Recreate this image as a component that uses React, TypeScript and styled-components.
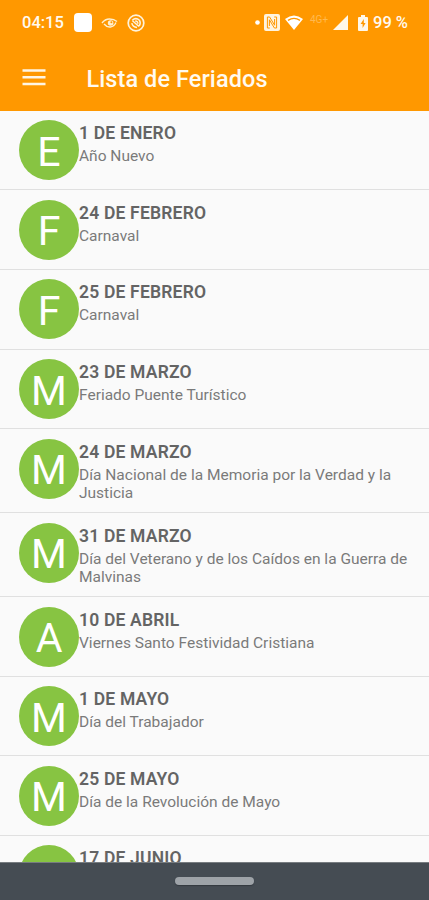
import React from 'react';
import styled, { createGlobalStyle } from 'styled-components';

const GlobalStyle = createGlobalStyle`
  * { box-sizing: border-box; }
  body { margin: 0; background: #fafafa; font-family: Roboto, sans-serif; }
`;

const Screen = styled.div`
  width: 429px;
  height: 900px;
  display: flex;
  flex-direction: column;
  overflow: hidden;
  background: #fafafa;
`;

const Header = styled.header`
  height: 110.8px;
  flex: none;
  background: #ff9800;
  color: #fffaf0;
`;

const StatusBar = styled.div`
  height: 45px;
  padding: 0 21px 0 22px;
  display: flex;
  align-items: center;
  justify-content: space-between;
`;

const StatusGroup = styled.div`
  display: flex;
  align-items: center;
`;

const StatusText = styled.span<{ $width: number }>`
  width: ${(p) => p.$width}px;
  font-size: 16.5px;
  font-weight: 500;
  line-height: 20px;
  white-space: nowrap;
`;

const NetworkLabel = styled.span`
  width: 20px;
  margin: 0 3px 6px 7px;
  font-size: 10px;
  line-height: 10px;
  color: #ffb850;
`;

const Glyph = styled.svg<{ $left?: number }>`
  display: block;
  flex: none;
  margin-left: ${(p) => p.$left ?? 0}px;
`;

const Toolbar = styled.div`
  height: 65px;
  padding: 0 23px 0 22px;
  display: flex;
  align-items: center;
`;

const MenuButton = styled.button`
  width: 24px;
  height: 24px;
  padding: 0;
  border: 0;
  background: none;
  color: inherit;
`;

const PageTitle = styled.h1`
  margin: 2px 0 0 40.5px;
  font-size: 23.5px;
  font-weight: 500;
  line-height: 28px;
  letter-spacing: 0.08px;
  white-space: nowrap;
`;

const HolidayList = styled.ul`
  flex: 1;
  min-height: 0;
  margin: 0;
  padding: 0;
  overflow: hidden;
  list-style: none;
`;

const HolidayRow = styled.li<{ $tall: boolean }>`
  height: ${(p) => (p.$tall ? 84 : 79.6)}px;
  padding: 9.4px 10px 0 19px;
  display: flex;
  align-items: flex-start;
  border-bottom: 1.5px solid #e0e0e0;
`;

const Avatar = styled.div`
  width: 60px;
  height: 60px;
  flex: none;
  display: flex;
  align-items: center;
  justify-content: center;
  padding-top: 3.4px;
  border-radius: 50%;
  background: #87c442;
  color: #fff;
  font-size: 41px;
  line-height: 48px;
`;

const Details = styled.div`
  flex: 1;
  min-width: 0;
  padding-top: 3px;
`;

const DateLabel = styled.div`
  font-size: 17.5px;
  font-weight: 600;
  line-height: 20px;
  letter-spacing: 0.19px;
  color: #646464;
  white-space: nowrap;
`;

const Description = styled.div`
  margin-top: 4px;
  font-size: 15.5px;
  line-height: 18px;
  color: #7a7a7a;
  white-space: pre-line;
`;

const NavigationBar = styled.footer`
  height: 38px;
  flex: none;
  display: flex;
  align-items: center;
  justify-content: center;
  border-top: 1px solid #777c80;
  background: #454c53;
`;

const HomeHandle = styled.div`
  width: 79px;
  height: 8px;
  margin-bottom: 1px;
  border-radius: 4px;
  background: #9ea3a8;
  box-shadow: 0 1px 1px #343a40;
`;

const holidays = [
  { date: '1 DE ENERO', letter: 'E', name: 'Año Nuevo' },
  { date: '24 DE FEBRERO', letter: 'F', name: 'Carnaval' },
  { date: '25 DE FEBRERO', letter: 'F', name: 'Carnaval' },
  { date: '23 DE MARZO', letter: 'M', name: 'Feriado Puente Turístico' },
  { date: '24 DE MARZO', letter: 'M', name: 'Día Nacional de la Memoria por la Verdad y la\nJusticia' },
  { date: '31 DE MARZO', letter: 'M', name: 'Día del Veterano y de los Caídos en la Guerra de\nMalvinas' },
  { date: '10 DE ABRIL', letter: 'A', name: 'Viernes Santo Festividad Cristiana' },
  { date: '1 DE MAYO', letter: 'M', name: 'Día del Trabajador' },
  { date: '25 DE MAYO', letter: 'M', name: 'Día de la Revolución de Mayo' },
  { date: '17 DE JUNIO', letter: 'J', name: '' },
];

export default function App() {
  return (
    <>
      <GlobalStyle />
      <Screen>
        <Header>
          <StatusBar>
            <StatusGroup>
              <StatusText $width={52}>04:15</StatusText>
              <Glyph width="18" height="19" viewBox="0 0 18 19">
                <rect width="18" height="19" rx="4" fill="#fff" />
              </Glyph>
              <Glyph $left={9} width="17" height="12" viewBox="0 0 17 12" fill="none" stroke="#fff0d0" strokeWidth="1.4">
                <path d="M1 6Q4 2 8.5 2T16 4.5M3 7Q6 10.5 9.5 10T15 5.5" />
                <circle cx="9.6" cy="6" r="2.8" fill="#fff0d0" stroke="none" />
                <circle cx="10.4" cy="5.2" r="1" fill="#ff9800" stroke="none" />
              </Glyph>
              <Glyph $left={9} width="18" height="18" viewBox="0 0 18 18" fill="none" stroke="#fff3dc" strokeWidth="1.7">
                <circle cx="9" cy="9" r="7.8" />
                <path d="M5.2 6.2Q9 3 12.4 6.2Q14.2 9.2 12.2 12M4.8 9.2Q5.6 13.2 10 13.4M5.5 6.8L12 12.5M8.2 7Q11 7 10.8 9.8" strokeWidth="1.5" />
              </Glyph>
            </StatusGroup>
            <StatusGroup>
              <Glyph width="5" height="5" viewBox="0 0 5 5">
                <circle cx="2.5" cy="2.5" r="2.3" fill="#fff" />
              </Glyph>
              <Glyph $left={4} width="16" height="17" viewBox="0 0 16 17">
                <rect width="16" height="17" rx="2" fill="#fff4df" />
                <path d="M5.8 14H3.4V3h2.2l5 8.2V5M10.2 3h2.4v11h-2.2l-5-8.2V12" fill="none" stroke="#ff9800" strokeWidth="1" />
              </Glyph>
              <Glyph $left={5} width="18" height="15" viewBox="0 0 18 15">
                <path d="M0 4Q9-3 18 4L9 15Z" fill="#fff" />
                <path d="M3 5.4Q9 1.4 15 5.4" fill="none" stroke="#ff9800" strokeWidth="1.3" />
              </Glyph>
              <NetworkLabel>4G+</NetworkLabel>
              <Glyph width="15" height="15" viewBox="0 0 15 15">
                <path d="M15 0V15H0Z" fill="#fff8ea" />
              </Glyph>
              <Glyph $left={10} width="10" height="16" viewBox="0 0 10 16">
                <path d="M3 0h4v2h2q1 0 1 1v12q0 1-1 1H1q-1 0-1-1V3q0-1 1-1h2Z" fill="#fff8ea" />
                <path d="M5.8 4L2.6 9h2v4l3-5H5.8Z" fill="#ff9800" />
              </Glyph>
              <Glyph width="5" height="1" />
              <StatusText $width={35}>99 %</StatusText>
            </StatusGroup>
          </StatusBar>
          <Toolbar>
            <MenuButton aria-label="Menú">
              <Glyph width="24" height="24" viewBox="0 0 24 24" stroke="#fff5e3" strokeWidth="2.5">
                <path d="M.5 4.5h23M.5 11.2h23M.5 17.9h23" />
              </Glyph>
            </MenuButton>
            <PageTitle>Lista de Feriados</PageTitle>
          </Toolbar>
        </Header>
        <HolidayList>
          {holidays.map((h) => (
            <HolidayRow key={h.date} $tall={h.name.includes('\n')}>
              <Avatar>{h.letter}</Avatar>
              <Details>
                <DateLabel>{h.date}</DateLabel>
                <Description>{h.name}</Description>
              </Details>
            </HolidayRow>
          ))}
        </HolidayList>
        <NavigationBar>
          <HomeHandle />
        </NavigationBar>
      </Screen>
    </>
  );
}
